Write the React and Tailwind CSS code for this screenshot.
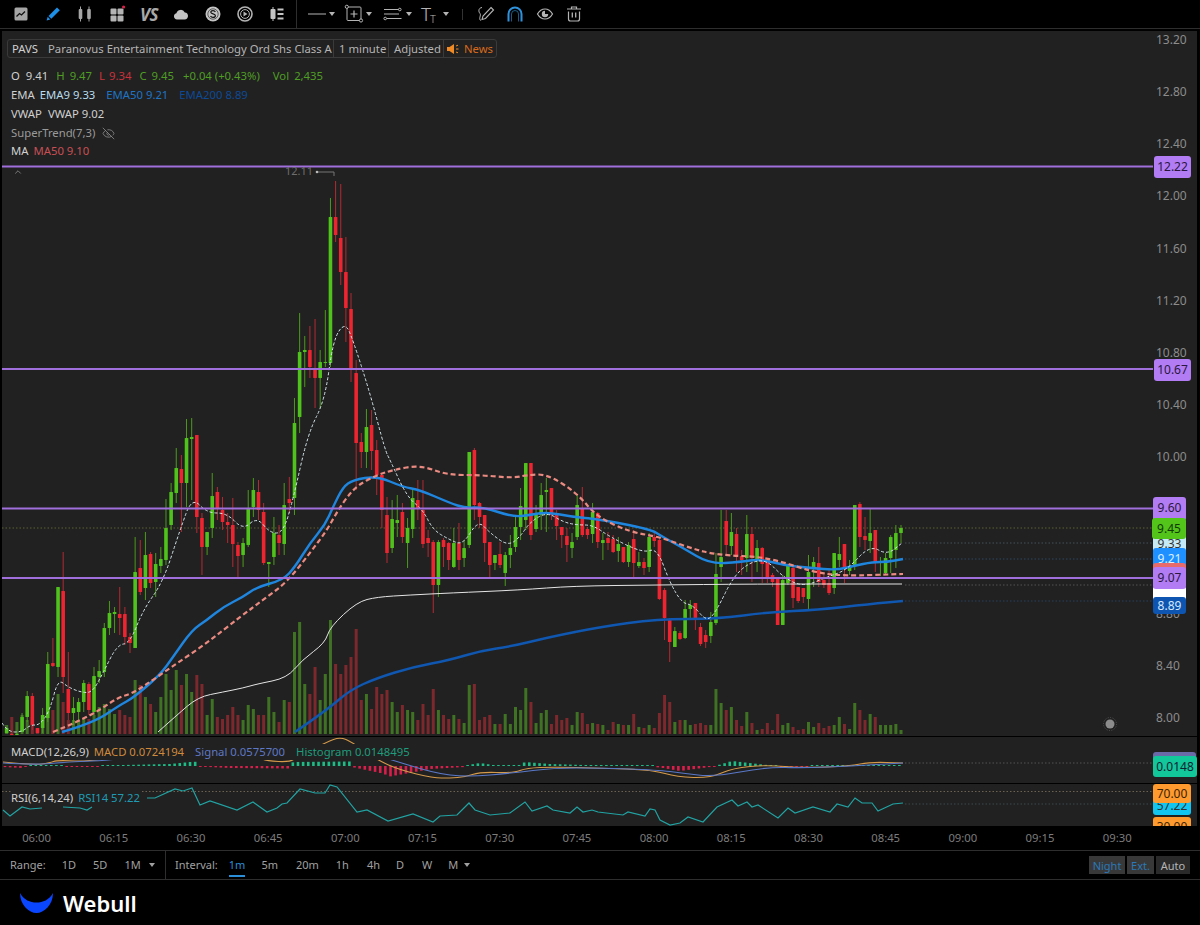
import React from 'react';
import { ChevronUp, EyeOff } from 'lucide-react';

// [up, wickTop, bodyTop, bodyBottom, wickBottom, volume] in page pixels
const CANDLES = [
  [1,728,728,733,733,8],[0,734,734,734,734,16],[1,734,734,734,734,11],
  [1,713,717,732,732,18],[1,691,696,717,722,13],[0,693,696,725,730,16],[0,728,728,733,733,4],[1,708,715,728,733,16],
  [1,652,664,718,722,16],[0,638,663,666,667,23],[1,587,587,667,677,39],[0,552,591,677,693,31],[0,652,689,713,720,13],
  [1,697,708,713,725,13],[1,698,702,712,720,13],[1,680,683,702,712,14],[0,682,684,710,715,14],[1,667,676,712,715,18],
  [1,660,671,677,683,26],[1,623,628,672,677,29],[1,601,613,628,635,24],[1,607,612,614,633,19],[0,587,614,618,635,23],
  [0,607,614,637,645,18],[0,633,637,643,653,16],[1,537,572,648,648,53],[0,540,568,592,595,48],[1,532,555,588,600,36],
  [0,552,554,583,588,29],[1,553,564,582,597,21],[1,547,559,566,573,36],[1,499,528,560,565,59],[1,483,492,525,530,43],
  [1,448,468,493,503,63],[0,455,469,483,532,48],[1,419,438,483,507,59],[1,418,437,439,500,41],[0,435,435,517,533,58],
  [0,513,518,547,575,49],[1,532,532,547,555,18],[1,473,496,528,538,34],[0,487,492,508,520,16],[0,497,510,522,530,14],
  [0,513,522,525,543,18],[0,498,525,544,567,26],[0,542,545,556,577,18],[1,538,543,555,567,13],[1,490,508,545,547,28],
  [1,478,490,507,517,24],[0,480,492,510,520,18],[0,503,512,563,565,18],[1,562,562,564,587,36],[1,517,533,557,565,21],
  [0,525,535,543,555,11],[1,483,505,544,555,33],[0,477,499,503,513,31],[1,398,423,498,515,101],[1,313,352,417,433,111],
  [1,336,350,352,387,49],[0,326,350,367,378,39],[0,319,368,378,408,66],[1,350,362,378,408,33],[1,310,362,363,367,59],
  [1,198,217,363,367,113],[0,181,217,235,242,69],[0,184,238,272,285,59],[0,237,272,308,342,68],[0,293,309,370,382,76],
  [0,360,373,443,490,104],[0,433,442,452,468,33],[1,409,427,452,468,39],[0,410,425,451,470,24],[0,440,450,475,495,46],
  [0,475,475,510,528,39],[0,497,515,553,563,43],[1,500,519,548,553,31],[1,495,520,523,537,21],[0,503,512,537,543,28],
  [1,518,528,543,568,23],[1,488,498,529,538,21],[0,480,500,508,520,13],[0,480,510,544,548,29],[0,530,538,543,557,18],
  [0,540,542,585,613,44],[1,540,542,585,597,23],[0,538,540,547,567,18],[0,542,543,560,570,14],
  [1,528,543,567,568,18],[0,523,543,560,570,14],[1,540,548,558,567,10],[1,452,452,545,548,48],[0,448,450,505,520,49],
  [0,502,503,517,528,13],[0,515,515,543,562,16],[0,542,542,565,577,18],[1,555,555,563,570,9],[0,542,554,565,568,9],
  [1,552,555,573,586,19],[1,535,548,555,568,9],[1,517,527,547,552,26],[1,488,506,527,540,23],[1,463,463,520,530,45],
  [0,463,463,535,540,31],[1,505,515,529,532,10],[1,483,495,515,530,20],[1,478,490,492,532,23],[0,488,488,515,520,9],
  [0,510,515,526,540,18],[0,527,527,535,548,13],[0,528,536,545,562,15],[1,533,542,548,558,8],[1,495,505,537,540,21],
  [0,487,508,535,537,20],[0,527,529,535,539,9],[1,503,512,534,543,10],[0,512,513,542,548,9],[1,533,540,543,560,8],
  [0,532,538,543,550,3],[0,535,539,552,553,11],[1,537,544,551,562,9],[0,547,547,562,563,8],[1,542,545,562,567,8],
  [0,530,539,563,578,19],[1,552,562,566,568,6],[0,558,562,568,575,5],[1,533,537,567,572,8],[0,533,537,541,547,5],
  [0,537,540,599,600,20],[0,588,590,618,640,38],[0,618,620,642,662,31],[1,627,631,647,647,11],[0,631,633,639,640,13],
  [1,600,609,638,639,13],[1,600,605,609,620,8],[0,603,603,620,630,9],[0,623,627,644,646,10],[0,630,635,642,648,8],
  [1,612,622,636,643,8],[1,553,574,623,625,44],[1,510,557,567,582,30],[0,510,521,545,555,23],[1,513,532,546,555,26],
  [0,528,534,555,572,13],[0,550,556,560,575,7],[1,515,534,558,572,21],[0,527,534,558,582,10],[1,540,548,560,572,3],
  [0,547,548,564,583,4],[0,561,561,578,583,10],[0,573,575,582,587,3],[0,577,578,625,625,19],[1,575,580,625,625,8],
  [1,564,565,583,585,10],[0,565,568,598,608,6],[0,587,587,601,603,3],[0,588,588,597,603,4],[1,555,572,599,610,11],
  [1,557,562,568,587,6],[0,547,563,582,587,10],[0,572,580,585,588,5],[0,570,583,593,595,7],[1,553,553,588,594,8],
  [1,537,554,560,567,16],[0,544,544,568,583,9],[1,560,566,571,575,4],[1,505,505,565,570,30],[0,502,504,537,547,23],
  [0,517,536,540,550,13],[1,508,533,541,553,19],[0,530,530,562,572,16],[1,557,562,563,576,8],[1,553,558,573,575,8],
  [1,535,537,558,573,8],[1,525,533,550,568,9],[1,525,528,533,543,3],
];

const STEP = 5.14;
const candleX = (i) => 901 - (CANDLES.length - 1 - i) * STEP;

// quadratic curve through the midpoints, so the averages don't look angular
const curve = (a) => {
  let d = `M${a[0][0]} ${a[0][1]}`;
  for (let i = 1; i < a.length - 1; i++) {
    const mx = (a[i][0] + a[i + 1][0]) / 2;
    const my = (a[i][1] + a[i + 1][1]) / 2;
    d += `Q${a[i][0]} ${a[i][1]} ${mx} ${my}`;
  }
  const last = a[a.length - 1];
  return `${d}L${last[0]} ${last[1]}`;
};
const line = (a) => 'M' + a.map((p) => p.join(' ')).join('L');

const MA50 = [[53,732],[77,722],[100,710],[117,698],[133,693],[150,682],[170,668],[207,643],[240,617],[263,600],[287,582],[310,553],[327,530],[337,512],[347,497],[358,485],[377,475],[393,470],[420,465],[447,475],[480,475],[513,478],[527,475],[547,474],[577,493],[597,517],[630,532],[660,537],[690,548],[717,555],[767,557],[813,572],[843,576],[903,574]];
const EMA50 = [[62,732],[93,723],[120,705],[133,698],[160,675],[173,657],[192,630],[207,620],[223,607],[243,597],[257,587],[283,580],[295,567],[310,543],[325,525],[333,507],[343,487],[353,480],[377,476],[403,487],[420,490],[450,503],[465,508],[483,507],[513,517],[530,515],[547,512],[573,517],[597,519],[650,529],[663,537],[683,548],[710,564],[740,562],[760,559],[783,565],[810,568],[837,570],[853,566],[873,562],[887,562],[903,559]];
const VWAP = [[158,732],[177,715],[198,697],[223,692],[243,688],[257,684],[287,678],[302,660],[325,643],[330,627],[357,602],[377,597],[410,595],[450,593],[520,590],[573,586],[657,585],[750,584],[902,584]];
const EMA200 = [[295,732],[327,710],[350,690],[377,678],[413,667],[450,660],[480,651],[513,646],[550,637],[600,627],[657,619],[717,619],[770,612],[817,610],[870,604],[903,601]];
const EMA9 = [[2,723],[8,732],[22,732],[30,725],[40,725],[50,710],[58,679],[68,687],[80,692],[92,693],[103,673],[117,645],[130,643],[143,610],[163,582],[180,530],[192,497],[207,513],[227,513],[243,530],[257,517],[270,533],[283,533],[293,500],[308,433],[325,400],[333,340],[345,322],[353,340],[370,393],[385,450],[390,460],[407,497],[423,510],[433,530],[450,540],[463,545],[478,520],[490,533],[508,546],[520,537],[530,522],[547,512],[563,522],[577,525],[593,525],[610,537],[643,553],[657,548],[670,583],[682,603],[693,605],[707,622],[717,610],[733,577],[750,562],[767,560],[783,577],[803,587],[827,577],[847,570],[870,545],[887,555],[902,543]];

const MACD_LINE = [[3,762],[33,765],[50,763],[57,760],[93,762],[187,743],[213,748],[257,757],[267,761],[290,762],[297,757],[327,742],[340,737],[352,742],[377,760],[400,770],[433,778],[450,778],[465,777],[480,772],[513,773],[527,768],[553,767],[600,768],[653,770],[677,777],[710,778],[733,768],[767,765],[803,768],[850,766],[870,762],[903,763]];
const MACD_SIGNAL = [[3,763],[33,765],[67,762],[117,760],[200,747],[257,755],[293,758],[333,747],[377,755],[433,773],[467,777],[513,773],[553,768],[600,768],[657,770],[683,773],[713,777],[767,767],[803,768],[850,766],[903,763]];
const MACD_HIST = [[3,-1],[22,-2],[28,0.5],[60,1],[64,-0.5],[98,-0.5],[100,0.5],[170,2],[195,4.5],[198,-0.5],[230,-2],[290,-2.5],[293,4],[350,4.5],[352,-1],[385,-8],[387,-11],[415,-6],[430,-3],[465,-1],[468,1],[480,3],[493,1],[520,1],[525,4],[550,2],[600,0.5],[653,0.5],[655,-1],[663,-2],[680,-5],[710,-1],[716,-0.5],[717,0.5],[732,5],[767,1],[776,0.5],[777,-0.5],[803,-0.5],[817,0.5],[903,0.5]];

const RSI_PARTS = [
  [[3,810],[10,816],[22,807],[30,809],[42,808]],
  [[63,807],[80,808],[87,810],[92,807]],
  [[147,798],[155,798],[175,789],[183,791],[192,788],[200,805],[210,801],[237,810],[253,802],[267,812],[277,808],[282,804],[287,803],[300,789],[315,793],[325,793],[330,785],[337,787],[357,812],[367,810],[388,821],[413,814],[433,822],[440,816],[457,815],[469,803],[475,810],[490,815],[510,813],[525,802],[532,811],[547,806],[553,810],[570,813],[577,807],[583,812],[592,810],[598,812],[623,815],[628,812],[645,816],[650,809],[655,810],[660,820],[670,825],[680,823],[688,817],[703,822],[717,807],[732,800],[738,806],[747,802],[752,807],[758,805],[778,818],[788,808],[795,813],[813,807],[830,812],[837,804],[848,807],[855,798],[862,803],[872,803],[878,811],[893,804],[903,803]],
];

const histAt = (x) => {
  for (let i = 1; i < MACD_HIST.length; i++) {
    const [x0, v0] = MACD_HIST[i - 1];
    const [x1, v1] = MACD_HIST[i];
    if (x <= x1) return v0 + ((x - x0) / (x1 - x0)) * (v1 - v0);
  }
  return 0.5;
};

const PRICES = ['13.20','12.80','12.40','12.00','11.60','11.20','10.80','10.40','10.00','9.60','9.20','8.80','8.40','8.00'];
const priceY = (p) => 39 + (13.2 - Number(p)) * 130.4;
const TIMES = ['06:00','06:15','06:30','06:45','07:00','07:15','07:30','07:45','08:00','08:15','08:30','08:45','09:00','09:15','09:30'];

const Caret = ({ className = '' }) => (
  <svg viewBox="0 0 6 4" className={`w-[6px] h-[4px] ${className}`}><path d="M0 0h6L3 4z" fill="currentColor" /></svg>
);

const Ico = ({ children, className = '' }) => (
  <svg viewBox="0 0 20 20" className={`w-5 h-5 ${className}`}>{children}</svg>
);

function Toolbar() {
  return (
    <div className="h-[29px] border-b border-[#2e2e2e] flex items-center text-[#b4b4b4]">
      <div className="w-[297px] h-full pl-[5px] border-r border-[#2e2e2e] flex items-center">
        <div className="w-8 flex justify-center">
          <Ico>
            <rect x="3.5" y="3.5" width="13" height="13" rx="1.5" fill="#a6a6a6" />
            <path d="M5.5 12.5l3-3 2 1.5 3.5-3.5" fill="none" stroke="#111" strokeWidth="1.3" />
          </Ico>
        </div>
        <div className="w-8 flex justify-center">
          <Ico>
            <path d="M14 3.5l2.8 2.8-8.5 8.5-2.8-2.8z" fill="#1e8fe6" />
            <path d="M4.7 12.8l2.6 2.6-3.7 1.1z" fill="#1e8fe6" />
          </Ico>
        </div>
        <div className="w-8 flex justify-center">
          <Ico>
            <path d="M5.5 2.5v15M14 2.5v15" stroke="#a6a6a6" strokeWidth="1" />
            <rect x="3.7" y="5" width="3.6" height="10" rx="1" fill="#a6a6a6" />
            <rect x="12.2" y="5" width="3.6" height="10" rx="1" fill="#a6a6a6" />
          </Ico>
        </div>
        <div className="w-8 flex justify-center">
          <Ico>
            <rect x="3.5" y="4.5" width="6" height="6" rx="1" fill="#b4b4b4" />
            <rect x="3.5" y="11.5" width="6" height="6" rx="1" fill="#b4b4b4" />
            <rect x="10.5" y="4.5" width="6" height="6" rx="1" fill="#b4b4b4" />
            <rect x="10.5" y="11.5" width="6" height="6" rx="1" fill="#b4b4b4" />
            <circle cx="16.6" cy="3" r="1.6" fill="#d81e4a" />
          </Ico>
        </div>
        <div className="w-8 flex justify-center">
          <span className="text-[17px] leading-none font-bold italic text-[#a8a8a8] tracking-[-0.5px]">VS</span>
        </div>
        <div className="w-8 flex justify-center">
          <Ico>
            <path d="M6 15.5a3.2 3.2 0 0 1-.6-6.3 4.5 4.5 0 0 1 8.4-.8 3.6 3.6 0 0 1 3.2 3.6c0 1.9-1.4 3.5-3.3 3.5z" fill="#c4c4c4" />
          </Ico>
        </div>
        <div className="w-8 flex justify-center">
          <Ico>
            <circle cx="10" cy="10" r="7.5" fill="#c4c4c4" />
            <circle cx="10" cy="10" r="5.2" fill="none" stroke="#111" strokeWidth="0.6" />
            <path d="M12.4 8c-.5-1-1.3-1.4-2.4-1.4-1.3 0-2.2.7-2.2 1.7 0 2.3 4.6 1 4.6 3.4 0 1-1 1.7-2.4 1.7-1.2 0-2-.5-2.5-1.4" fill="none" stroke="#111" strokeWidth="1.2" />
          </Ico>
        </div>
        <div className="w-8 flex justify-center">
          <Ico>
            <circle cx="10" cy="10" r="7" fill="none" stroke="#b4b4b4" strokeWidth="1.6" />
            <circle cx="10" cy="10" r="4.4" fill="none" stroke="#b4b4b4" strokeWidth="1" />
            <path d="M8.5 7.5l4 2.5-4 2.5z" fill="#b4b4b4" />
          </Ico>
        </div>
        <div className="w-8 flex justify-center">
          <Ico>
            <path d="M6 3v14" stroke="#c4c4c4" strokeWidth="1" />
            <rect x="3.5" y="5" width="5" height="10" rx="1" fill="#c4c4c4" />
            <path d="M10.5 5.5h6M10.5 10h6M10.5 14.5h6" stroke="#c4c4c4" strokeWidth="2.2" />
          </Ico>
        </div>
      </div>

      <div className="flex items-center h-full">
        <svg viewBox="0 0 18 2" className="w-[18px] h-[2px] ml-[11px]"><path d="M0 1h18" stroke="#b4b4b4" strokeWidth="1" /></svg>
        <Caret className="ml-[3px]" />
        <Ico className="ml-[9px]">
          <rect x="3" y="3" width="14" height="13.5" fill="none" stroke="#b4b4b4" strokeWidth="1" rx="1" />
          <path d="M10 6.5v7M6.5 10h7" stroke="#b4b4b4" strokeWidth="1.2" />
          <circle cx="2.8" cy="2.8" r="1.6" fill="#000" stroke="#b4b4b4" />
          <circle cx="17" cy="16.5" r="1.6" fill="#000" stroke="#b4b4b4" />
        </Ico>
        <Caret className="ml-[2px]" />
        <Ico className="ml-[11px]">
          <path d="M1 5.5h15M1 10h15M3.5 14.5h15" stroke="#b4b4b4" strokeWidth="1.2" />
          <circle cx="16.8" cy="5.5" r="1.3" fill="#000" stroke="#b4b4b4" />
          <circle cx="2.2" cy="14.5" r="1.3" fill="#000" stroke="#b4b4b4" />
        </Ico>
        <Caret className="ml-[3px]" />
        <div className="ml-[9px] w-[17px] flex items-end font-light leading-none">
          <span className="text-[19px]">T</span>
          <span className="text-[11px] -ml-[1px]">T</span>
        </div>
        <Caret className="ml-[5px]" />
        <div className="ml-[13px] w-px h-[11px] bg-[#333]" />
        <Ico className="ml-[13px]">
          <path d="M6 3.5C2 4 2.5 8 4 9.5c1.5 1.5-2 6 1 7" fill="none" stroke="#b4b4b4" strokeWidth="1" />
          <path d="M15 3.5l2.5 2.5-8 8.5-3.5 1 1-3.5z" fill="none" stroke="#b4b4b4" strokeWidth="1.1" />
        </Ico>
        <Ico className="ml-[9px]">
          <path d="M3.5 17.5V10a6.5 6.5 0 0 1 13 0v7.5" fill="none" stroke="#2f93dc" strokeWidth="2" />
          <path d="M6.5 17.5V10a3.5 3.5 0 0 1 7 0v7.5" fill="none" stroke="#2f93dc" strokeWidth="0.6" />
        </Ico>
        <Ico className="ml-[10px]">
          <path d="M2.5 10c2-3.5 4.5-5 7.5-5s5.5 1.5 7.5 5c-2 3.5-4.5 5-7.5 5s-5.5-1.5-7.5-5z" fill="none" stroke="#b4b4b4" strokeWidth="1.2" />
          <path d="M10 6.8a3.2 3.2 0 1 0 3.2 3.2H10z" fill="#b4b4b4" />
        </Ico>
        <Ico className="ml-[9px]">
          <path d="M3 5h14M7.5 5V3h5v2" fill="none" stroke="#b4b4b4" strokeWidth="1.2" />
          <path d="M4.5 7.5V15a2 2 0 0 0 2 2h7a2 2 0 0 0 2-2V7.5" fill="none" stroke="#b4b4b4" strokeWidth="1.2" />
          <path d="M8.3 8.5v5M11.7 8.5v5" stroke="#b4b4b4" strokeWidth="1.3" />
        </Ico>
      </div>
    </div>
  );
}

function PriceChart() {
  return (
    <svg viewBox="2 31 1195 705" className="absolute inset-0 w-[1195px] h-[705px]">
      {CANDLES.map((c, i) => (
        <rect key={i} x={candleX(i) - 1.5} y={733 - c[5]} width="3" height={c[5] + 1} fill={c[0] ? '#3f7223' : '#7c282d'} />
      ))}
      <path d="M2 528h1151" stroke="#5d6133" strokeWidth="1" strokeDasharray="1.5 2" />
      <path d="M905 543h248" stroke="#45535a" strokeWidth="1" strokeDasharray="1.5 2" />
      <path d="M905 559h248" stroke="#2c4660" strokeWidth="1" strokeDasharray="1.5 2" />
      <path d="M905 585h248" stroke="#555" strokeWidth="1" strokeDasharray="1.5 2" />
      <path d="M905 601h248" stroke="#25405e" strokeWidth="1" strokeDasharray="1.5 2" />
      {CANDLES.map((c, i) => {
        const x = candleX(i);
        return (
          <g key={i}>
            <path d={`M${x} ${c[1]}V${Math.min(c[4], 733)}`} stroke={c[0] ? '#4c9a1d' : '#b42a31'} strokeWidth="1" />
            <rect x={x - 1.8} y={c[2]} width="3.6" height={Math.max(Math.min(c[3], 733) - c[2], 1)} rx="0.5" fill={c[0] ? '#50c21c' : '#ee2530'} />
          </g>
        );
      })}
      <path d={curve(VWAP)} fill="none" stroke="#e4e4e4" strokeWidth="1" />
      <path d={curve(EMA200)} fill="none" stroke="#0f57b0" strokeWidth="2.4" />
      <path d={curve(EMA50)} fill="none" stroke="#1f86e0" strokeWidth="2.4" />
      <path d={curve(MA50)} fill="none" stroke="#ea8a80" strokeWidth="2.2" strokeDasharray="5 3" />
      <path d={curve(EMA9)} fill="none" stroke="#d4e6ea" strokeWidth="1" strokeDasharray="3 2" />
      <path d="M2 166.5h1151M2 369h1151M2 508.5h1151M2 578h1151" stroke="#a06fdc" strokeWidth="2" />
      <path d="M318 172h16v4" fill="none" stroke="#777" strokeWidth="1" />
      <circle cx="317" cy="172" r="1.3" fill="#bbb" />
      <circle cx="1110" cy="724" r="4.5" fill="#8c8c8c" />
      <circle cx="1110" cy="724" r="6.5" fill="none" stroke="#555" strokeWidth="1" strokeDasharray="1 1.5" />
    </svg>
  );
}

function MacdChart() {
  const bars = [];
  for (let x = 5; x < 903; x += STEP) {
    const v = histAt(x);
    bars.push(
      <rect key={x} x={x - 1.3} y={v > 0 ? 766 - Math.max(v, 1) : 766} width="2.6" height={Math.max(Math.abs(v), 1)} fill={v > 0 ? '#1dbb85' : '#d81e4a'} />
    );
  }
  return (
    <svg viewBox="2 737 1195 46" className="absolute inset-0 w-[1195px] h-[46px]">
      {bars}
      <path d={curve(MACD_LINE)} fill="none" stroke="#d59a4a" strokeWidth="1.1" />
      <path d={curve(MACD_SIGNAL)} fill="none" stroke="#5a78c8" strokeWidth="1.1" />
      <path d="M905 763h248" stroke="#555" strokeWidth="1" strokeDasharray="1.5 2" />
    </svg>
  );
}

function RsiChart() {
  return (
    <svg viewBox="2 784 1195 42" className="absolute inset-0 w-[1195px] h-[42px]">
      <path d="M2 791.5h1151" stroke="#6b6252" strokeWidth="1" strokeDasharray="1.5 2" />
      <path d="M905 804h248" stroke="#3d4a4e" strokeWidth="1" strokeDasharray="1.5 2" />
      {RSI_PARTS.map((p, i) => (
        <path key={i} d={line(p)} fill="none" stroke="#22a3a3" strokeWidth="1.2" />
      ))}
    </svg>
  );
}

export default function App() {
  return (
    <div className="w-[1200px] h-[925px] bg-black overflow-hidden flex flex-col font-['Noto_Sans',sans-serif] text-[11.3px] text-[#c8c8c8]">
      <Toolbar />

      <div className="mt-[2px] ml-[2px] w-[1195px] flex flex-col gap-px">
        {/* main pane */}
        <div className="relative h-[705px] bg-[#212121] overflow-hidden">
          <PriceChart />

          {PRICES.map((p) => (
            <span key={p} className="absolute left-[1154px] text-[12px] leading-[18px] text-[#8c8c8c]" style={{ top: priceY(p) - 39 }}>{p}</span>
          ))}

          <div className="absolute left-[1152px] top-[125px] w-[37px] h-[22px] rounded-[3px] bg-[#b27cf4] text-[12px] text-[#2a1740] text-center leading-[22px]">12.22</div>
          <div className="absolute left-[1152px] top-[328px] w-[37px] h-[22px] rounded-[3px] bg-[#b27cf4] text-[12px] text-[#2a1740] text-center leading-[22px]">10.67</div>
          <div className="absolute left-[1151px] top-[466px] w-[33px] h-[24px] rounded-[3px] bg-[#b27cf4] text-[12px] text-[#2a1740] text-center leading-[22px]">9.60</div>
          <div className="absolute left-[1151px] top-[503px] w-[33px] h-[20px] rounded-[3px] bg-[#c6ebf7] text-[12px] text-[#333] text-center leading-[20px]">9.33</div>
          <div className="absolute left-[1150px] top-[487px] w-[34px] h-[21px] rounded-[3px] bg-[#52c41a] text-[12px] text-[#123a05] text-center leading-[21px]">9.45</div>
          <div className="absolute left-[1151px] top-[517px] w-[33px] h-[20px] rounded-[3px] bg-[#1e90ff] text-[12px] text-[#dff0ff] text-center leading-[22px]">9.21</div>
          <div className="absolute left-[1151px] top-[532px] w-[33px] h-[20px] rounded-[3px] bg-[#e86a6a] text-[12px] text-[#333] text-center leading-[20px]">9.10</div>
          <div className="absolute left-[1151px] top-[555px] w-[33px] h-[20px] rounded-[3px] bg-white" />
          <div className="absolute left-[1151px] top-[566px] w-[33px] h-[17px] rounded-[3px] bg-[#0d55b0] text-[12px] text-[#d4e8ff] text-center leading-[17px]">8.89</div>
          <div className="absolute left-[1151px] top-[536px] w-[33px] h-[22px] rounded-[3px] bg-[#b27cf4] text-[12px] text-[#2a1740] text-center leading-[22px]">9.07</div>

          <span className="absolute left-[283px] top-[133px] text-[11px] leading-[14px] text-[#6e6e6e]">12.11</span>
          <ChevronUp className="absolute left-[11px] top-[136px] w-[10px] h-[10px] text-[#8a8a8a]" />

          {/* legend */}
          <div className="absolute left-[5px] top-[8px] flex flex-col">
            <div className="h-[19px] w-[490px] flex items-center rounded-[3px] border border-[#3a3a3a] text-[#b4b4b4] leading-none">
              <div className="w-[326px] pl-[4px] flex items-center border-r border-[#3a3a3a] h-full">
                <span className="text-[#d0d0d0]">PAVS</span>
                <span className="ml-[10px] whitespace-nowrap">Paranovus Entertainment Technology Ord Shs Class A</span>
              </div>
              <div className="w-[55px] pl-[5px] flex items-center border-r border-[#3a3a3a] h-full whitespace-nowrap">1 minute</div>
              <div className="w-[55px] pl-[5px] flex items-center border-r border-[#3a3a3a] h-full">Adjusted</div>
              <div className="pl-[3px] flex items-center gap-[5px] text-[#d96a1c]">
                <svg viewBox="0 0 12 12" className="w-3 h-3">
                  <path d="M0 4h2.5L7 1v10L2.5 8H0z" fill="#f08a24" />
                  <path d="M9 3l2-.8M9 6h2.5M9 9l2 .8" stroke="#f08a24" strokeWidth="1" />
                </svg>
                News
              </div>
            </div>

            <div className="mt-[9px] h-[19px] flex items-center pl-[4px] whitespace-nowrap">
              <span className="text-[#d0d0d0]">O</span><span className="ml-[6px] text-[#d0d0d0]">9.41</span>
              <span className="ml-[8px] text-[#4f9e24]">H</span><span className="ml-[5px] text-[#4f9e24]">9.47</span>
              <span className="ml-[7px] text-[#c8323c]">L</span><span className="ml-[4px] text-[#c8323c]">9.34</span>
              <span className="ml-[8px] text-[#4f9e24]">C</span><span className="ml-[5px] text-[#4f9e24]">9.45</span>
              <span className="ml-[9px] text-[#4f9e24]">+0.04 (+0.43%)</span>
              <span className="ml-[13px] text-[#4f9e24]">Vol</span><span className="ml-[5px] text-[#4f9e24]">2,435</span>
            </div>
            <div className="h-[19px] flex items-center pl-[4px] whitespace-nowrap">
              <span className="text-[#d0d0d0]">EMA</span>
              <span className="ml-[5px] text-[#b8dcec]">EMA9 9.33</span>
              <span className="ml-[11px] text-[#1f74c4]">EMA50 9.21</span>
              <span className="ml-[11px] text-[#0d4a96]">EMA200 8.89</span>
            </div>
            <div className="h-[19px] flex items-center pl-[4px] whitespace-nowrap text-[#d0d0d0]">
              <span>VWAP</span>
              <span className="ml-[6px]">VWAP 9.02</span>
            </div>
            <div className="h-[18px] flex items-center pl-[4px] whitespace-nowrap text-[#9a9a9a]">
              <span>SuperTrend(7,3)</span>
              <EyeOff className="ml-[7px] w-[13px] h-[13px] text-[#8c8c8c]" strokeWidth={1.5} />
            </div>
            <div className="h-[19px] flex items-center pl-[4px] whitespace-nowrap">
              <span className="text-[#d0d0d0]">MA</span>
              <span className="ml-[5px] text-[#c94f55]">MA50 9.10</span>
            </div>
          </div>
        </div>

        {/* macd pane */}
        <div className="relative h-[46px] bg-[#212121] overflow-hidden">
          <MacdChart />
          <div className="absolute left-[9px] top-[7px] flex items-center bg-[#212121] leading-4 whitespace-nowrap">
            <span className="text-[#d0d0d0]">MACD(12,26,9)</span>
            <span className="ml-[5px] text-[#d08a3c]">MACD 0.0724194</span>
            <span className="ml-[11px] text-[#5f78c4]">Signal 0.0575700</span>
            <span className="ml-[11px] text-[#1f9c7c]">Histogram 0.0148495</span>
          </div>
          <div className="absolute left-[1151px] top-[15px] w-[43px] h-[21px] rounded-[3px] bg-[#6a6aa8]" />
          <div className="absolute left-[1151px] top-[19px] w-[44px] h-[21px] rounded-[3px] bg-[#12c79a] text-[12px] text-[#123] text-center leading-[21px]">0.0148</div>
        </div>

        {/* rsi pane */}
        <div className="relative h-[42px] bg-[#212121] overflow-hidden">
          <RsiChart />
          <div className="absolute left-[9px] top-[6px] flex items-center gap-[5px] bg-[#212121] leading-4 whitespace-nowrap">
            <span className="text-[#d0d0d0]">RSI(6,14,24)</span>
            <span className="text-[#1f9cb4]">RSI14 57.22</span>
          </div>
          <div className="absolute left-[1151px] top-[13px] w-[38px] h-[18px] rounded-[3px] bg-[#12c4f0] text-[12px] text-[#333] text-center leading-[18px]">57.22</div>
          <div className="absolute left-[1151px] top-0 w-[38px] h-[19px] rounded-[3px] bg-[#ff9a2e] text-[12px] text-[#3a2408] text-center leading-[19px]">70.00</div>
          <div className="absolute left-[1151px] top-[33px] w-[38px] h-[19px] rounded-[3px] bg-[#ff9a2e] text-[12px] text-[#3a2408] text-center leading-[19px]">30.00</div>
        </div>
      </div>

      {/* time axis */}
      <div className="h-[25px] flex items-center text-[#7c7c7c] border-b border-[#2e2e2e] -ml-[2px]">
        {TIMES.map((t) => (
          <span key={t} className="w-[77.2px] shrink-0 text-center">{t}</span>
        ))}
      </div>

      {/* range bar */}
      <div className="h-[29px] flex items-center text-[11px] text-[#a0a0a0] border-b border-[#2e2e2e]">
        <div className="w-[166px] h-full pl-[10px] flex items-center border-r border-[#2e2e2e]">
          <span>Range:</span>
          <span className="ml-[16px]">1D</span>
          <span className="ml-[17px]">5D</span>
          <span className="ml-[17px]">1M</span>
          <Caret className="ml-[8px]" />
        </div>
        <span className="ml-[9px]">Interval:</span>
        <span className="relative ml-[11px] h-full flex items-center text-[#2a8fd8]">
          1m
          <span className="absolute left-0 right-0 bottom-[2px] h-[2px] bg-[#2a8fd8]" />
        </span>
        <span className="ml-[16px]">5m</span>
        <span className="ml-[18px]">20m</span>
        <span className="ml-[17px]">1h</span>
        <span className="ml-[18px]">4h</span>
        <span className="ml-[16px]">D</span>
        <span className="ml-[18px]">W</span>
        <span className="ml-[16px]">M</span>
        <Caret className="ml-[6px]" />
        <div className="ml-auto mr-[10px] flex items-center h-[18px] gap-[2px] leading-none">
          <span className="w-[36px] h-full flex items-center justify-center bg-[#383838] text-[#2a78b8]">Night</span>
          <span className="w-[27px] h-full flex items-center justify-center bg-[#383838] text-[#2a78b8]">Ext.</span>
          <span className="w-[34px] h-full flex items-center justify-center bg-[#2a2a2a] text-[#b4b4b4]">Auto</span>
        </div>
      </div>

      {/* footer */}
      <div className="flex-1 flex items-center pl-[20px]">
        <svg viewBox="0 0 33 20" className="w-[33px] h-[20px]">
          <path d="M0 0C0 12 9 20 16.5 20S33 12 33 0C29 7 23 9.5 16.5 9.5S4 7 0 0z" fill="#0b46ff" />
        </svg>
        <span className="ml-[10px] text-[22px] leading-none font-semibold text-white">Webull</span>
      </div>
    </div>
  );
}
